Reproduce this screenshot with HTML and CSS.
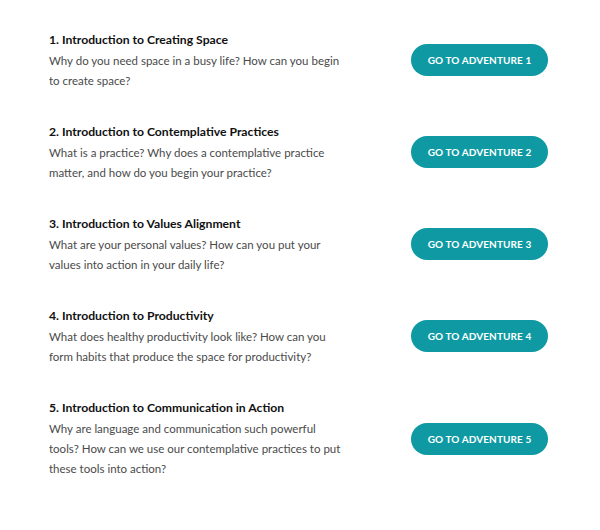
FILE: index.html
```html
<!DOCTYPE html>
<html lang="en">
<head>
  <meta charset="UTF-8">
  <title>Adventures</title>
  <link rel="stylesheet" href="styles.css">
</head>
<body>
  <div class="list">
    <div class="item">
      <div class="info">
        <h3>1. Introduction to Creating Space</h3>
        <p>Why do you need space in a busy life? How can you begin to create space?</p>
      </div>
      <a class="btn" href="#">Go to Adventure 1</a>
    </div>

    <div class="item">
      <div class="info">
        <h3>2. Introduction to Contemplative Practices</h3>
        <p>What is a practice? Why does a contemplative practice matter, and how do you begin your practice?</p>
      </div>
      <a class="btn" href="#">Go to Adventure 2</a>
    </div>

    <div class="item">
      <div class="info">
        <h3>3. Introduction to Values Alignment</h3>
        <p>What are your personal values? How can you put your values into action in your daily life?</p>
      </div>
      <a class="btn" href="#">Go to Adventure 3</a>
    </div>

    <div class="item">
      <div class="info">
        <h3>4. Introduction to Productivity</h3>
        <p>What does healthy productivity look like? How can you form habits that produce the space for productivity?</p>
      </div>
      <a class="btn" href="#">Go to Adventure 4</a>
    </div>

    <div class="item">
      <div class="info">
        <h3>5. Introduction to Communication in Action</h3>
        <p>Why are language and communication such powerful tools? How can we use our contemplative practices to put these tools into action?</p>
      </div>
      <a class="btn" href="#">Go to Adventure 5</a>
    </div>
  </div>
</body>
</html>
```

FILE: styles.css
```css
body {
  margin: 0;
  background: #fff;
  font-family: Lato, 'Open Sans', sans-serif;
}

.list {
  width: 499px;
  padding: 30px 0 0 49px;
}

.item {
  display: flex;
  align-items: center;
  justify-content: space-between;
  margin-bottom: 31px;
}

.info {
  width: 298px;
}

.info h3 {
  margin: 0;
  font-size: 12.2px;
  font-weight: 700;
  line-height: 20.5px;
  color: #111;
}

.info p {
  margin: 0;
  font-size: 11.5px;
  line-height: 20.3px;
  color: #4a4a4a;
}

.btn {
  display: inline-block;
  width: 137px;
  height: 32px;
  margin-top: -1px;
  line-height: 32px;
  border-radius: 16px;
  background: #0f9aa3;
  color: #fff;
  text-align: center;
  text-decoration: none;
  text-transform: uppercase;
  font-size: 10px;
  font-weight: 700;
  letter-spacing: 0.1px;
}
```
